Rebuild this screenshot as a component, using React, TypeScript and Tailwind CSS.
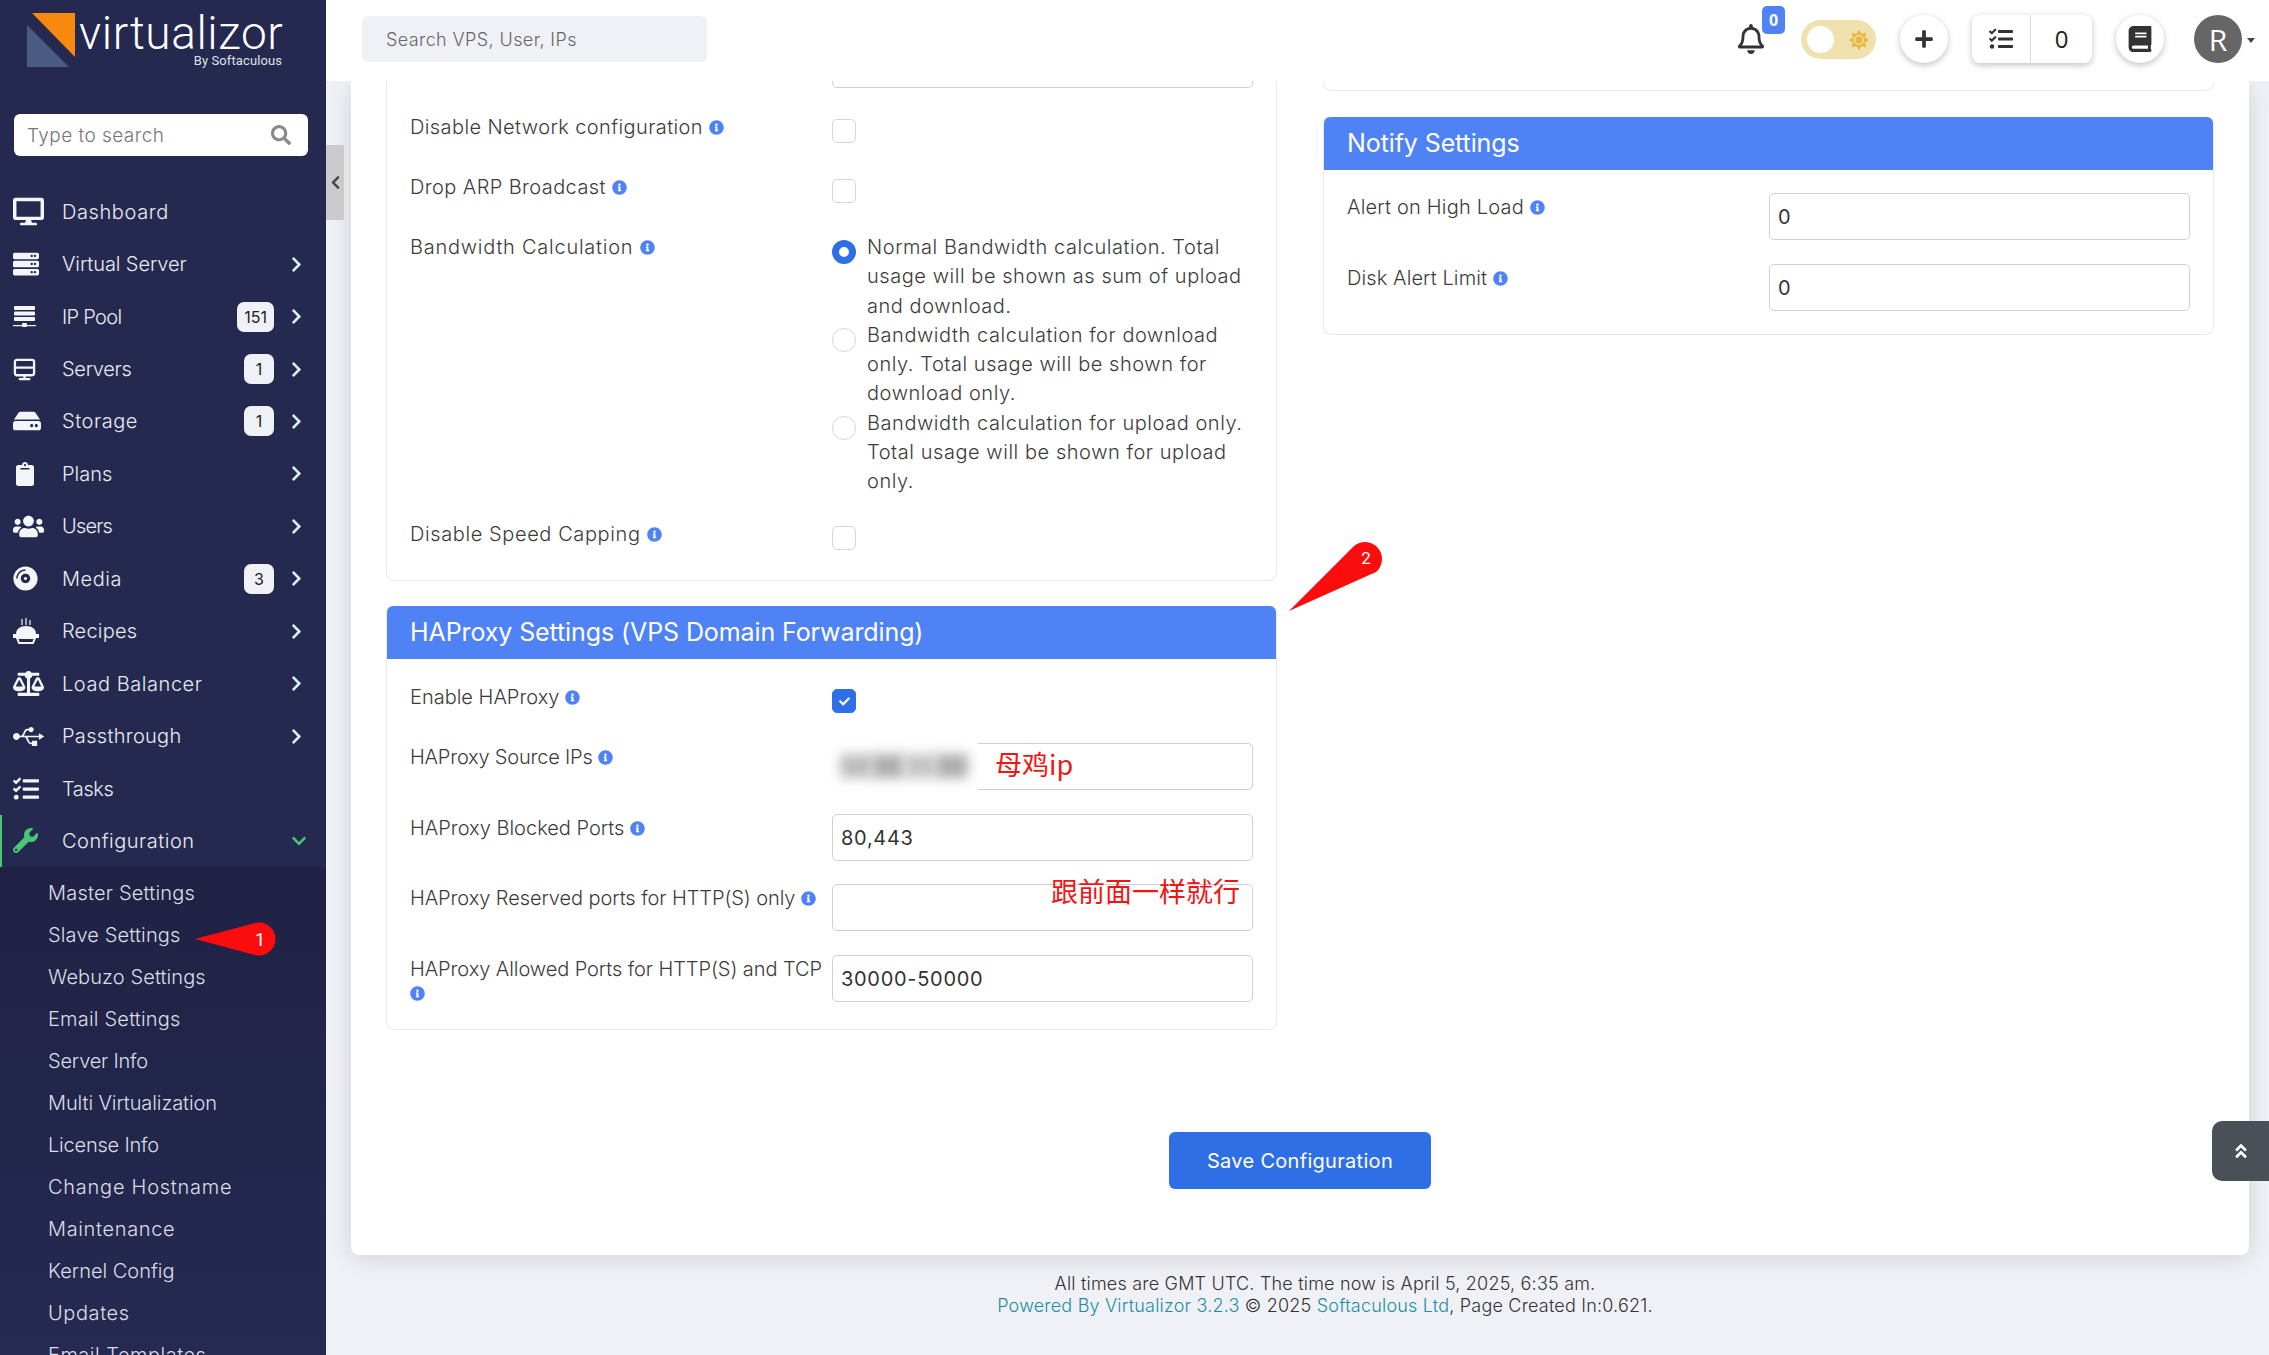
import type { ReactNode } from "react";
import {
  FaBalanceScale,
  FaBook,
  FaChevronDown,
  FaChevronLeft,
  FaChevronRight,
  FaClipboard,
  FaCheck,
  FaCompactDisc,
  FaAngleDoubleUp,
  FaDesktop,
  FaHdd,
  FaInfoCircle,
  FaPlus,
  FaRegBell,
  FaSearch,
  FaServer,
  FaSun,
  FaTasks,
  FaUsb,
  FaUsers,
  FaWrench,
} from "react-icons/fa";

const IpPoolIcon = () => (
  <svg viewBox="0 0 24 22" className="h-[22px] w-[24px]" fill="currentColor">
    <rect x="1" y="0" width="21" height="4" rx="1" />
    <rect x="1" y="5.5" width="21" height="4" rx="1" />
    <rect x="1" y="11" width="21" height="4" rx="1" />
    <rect x="0" y="19" width="23" height="1.2" />
    <rect x="9" y="17" width="5" height="4" rx="1" />
  </svg>
);

const ServersIcon = () => (
  <svg viewBox="0 0 24 24" className="h-[23px] w-[23px]" fill="none" stroke="currentColor" strokeWidth="2.4">
    <rect x="2" y="2" width="20" height="16" rx="2" />
    <path d="M2 10h20M12 18v4M6 22h12" />
  </svg>
);

const RecipesIcon = () => (
  <svg viewBox="0 0 26 26" className="h-[26px] w-[26px]" fill="currentColor">
    <path d="M9 1v6M13 0v7M17 2v5" stroke="currentColor" strokeWidth="1.2" fill="none" />
    <path d="M3 16c0-5 4-8 10-8s10 3 10 8z" />
    <path d="M1 17h24v2H1zM4 20h18l-2 5H6z" fill="none" stroke="currentColor" strokeWidth="2" />
  </svg>
);

const menu: { label: string; track: string; icon: ReactNode; badge?: string; arrow?: boolean }[] = [
  { label: "Dashboard", track: "tracking-[0.6px]", icon: <FaDesktop size={31} /> },
  { label: "Virtual Server", track: "tracking-[-0.1px]", icon: <FaServer size={26} />, arrow: true },
  { label: "IP Pool", track: "tracking-[-0.7px]", icon: <IpPoolIcon />, badge: "151", arrow: true },
  { label: "Servers", track: "tracking-[-0.3px]", icon: <ServersIcon />, badge: "1", arrow: true },
  { label: "Storage", track: "tracking-[0.55px]", icon: <FaHdd size={28} />, badge: "1", arrow: true },
  { label: "Plans", track: "tracking-[0px]", icon: <FaClipboard size={24} />, arrow: true },
  { label: "Users", track: "tracking-[-0.8px]", icon: <FaUsers size={31} />, arrow: true },
  { label: "Media", track: "tracking-[0.55px]", icon: <FaCompactDisc size={25} />, badge: "3", arrow: true },
  { label: "Recipes", track: "tracking-[0.2px]", icon: <RecipesIcon />, arrow: true },
  { label: "Load Balancer", track: "tracking-[0.55px]", icon: <FaBalanceScale size={31} />, arrow: true },
  { label: "Passthrough", track: "tracking-[0.3px]", icon: <FaUsb size={31} />, arrow: true },
  { label: "Tasks", track: "tracking-[-0.4px]", icon: <FaTasks size={26} /> },
];

const submenu = [
  { name: "Master Settings", track: "tracking-[0.2px]" },
  { name: "Slave Settings", track: "tracking-[0.15px]" },
  { name: "Webuzo Settings", track: "tracking-[0.1px]" },
  { name: "Email Settings", track: "tracking-[0.2px]" },
  { name: "Server Info", track: "tracking-[-0.2px]" },
  { name: "Multi Virtualization", track: "tracking-[-0.1px]" },
  { name: "License Info", track: "tracking-[-0.2px]" },
  { name: "Change Hostname", track: "tracking-[0.75px]" },
  { name: "Maintenance", track: "tracking-[0.65px]" },
  { name: "Kernel Config", track: "tracking-[0px]" },
  { name: "Updates", track: "tracking-[0.6px]" },
  { name: "Email Templates", track: "tracking-[0.5px]" },
];

function Sidebar() {
  return (
    <aside className="h-screen w-[326px] shrink-0 overflow-hidden bg-[#252950] text-[#e8e9f0]">
      <div className="flex h-[114px] items-start gap-[3px] pl-[27px] pt-[11px]">
        <svg viewBox="0 0 49 55" className="mt-[2px] h-[55px] w-[49px] shrink-0">
          <polygon points="5,0 48,0 48,44" fill="#f7890f" />
          <polygon points="0,12 42,54 0,54" fill="#4a5a82" />
        </svg>
        <div className="flex w-[203px] flex-col">
          <span className="font-['Roboto',sans-serif] text-[46px] font-light leading-[44px] tracking-[0.6px] text-white">virtualizor</span>
          <span className="self-end font-['Roboto',sans-serif] text-[13px] leading-[12px] tracking-[0.1px] text-[#dfe1ea]">By Softaculous</span>
        </div>
      </div>

      <div className="ml-[14px] mr-[18px] flex h-[42px] items-center justify-between rounded-[6px] bg-white pl-[13px] pr-[17px]">
        <span className="mt-[2px] text-[19px] font-light tracking-[0.45px] text-[#777]">Type to search</span>
        <FaSearch size={20} className="text-[#888]" />
      </div>

      <nav className="mt-[29.5px]">
        {menu.map((item) => (
          <div key={item.label} className="flex h-[52.45px] items-center pl-[13px] pr-[21px]">
            <span className="flex w-[49px] shrink-0 items-center text-[#f4f5f8]">{item.icon}</span>
            <span className={`flex-1 text-[20px] font-light ${item.track}`}>{item.label}</span>
            {item.badge && (
              <span className="mr-[14px] flex h-[30px] min-w-[30px] items-center justify-center rounded-[7px] bg-[#f0f1f7] px-[7px] text-[16px] text-[#222]">
                {item.badge}
              </span>
            )}
            {item.arrow && <FaChevronRight size={17} className="text-[#d5f3f3]" />}
          </div>
        ))}

        <div className="flex h-[52.45px] items-center border-l-2 border-[#48c774] pl-[11px] pr-[19px]">
          <span className="flex w-[49px] shrink-0 items-center text-[#48c774]">
            <FaWrench size={25} />
          </span>
          <span className="flex-1 text-[20px] font-light tracking-[0.5px]">Configuration</span>
          <FaChevronDown size={16} className="text-[#48c774]" />
        </div>

        <div className="bg-gradient-to-b from-[#1f2244] to-[#262a52] pl-[48px] pt-[4.5px]">
          {submenu.map((s) => (
            <div key={s.name} className={`flex h-[42px] items-center text-[20px] font-light text-[#dcdde6] ${s.track}`}>
              {s.name}
            </div>
          ))}
        </div>
      </nav>
    </aside>
  );
}

function Topbar() {
  const circle = "flex h-[48px] w-[48px] items-center justify-center rounded-full bg-white text-[#333] shadow-[0_2px_6px_rgba(0,0,0,0.25)]";
  return (
    <header className="flex h-[81px] shrink-0 items-start bg-white pl-[36px] pt-[15px]">
      <div className="mt-px flex h-[46px] w-[345px] items-center rounded-[6px] bg-[#f0f1f7] pl-[24px] text-[18px] font-light tracking-[0.4px] text-[#666]">
        Search VPS, User, IPs
      </div>
      <div className="ml-auto flex items-start">
        <div className="relative mr-[37px] mt-[9px] h-[30px] w-[27px] text-[#333]">
          <FaRegBell size={30} className="-ml-[1px]" />
          <span className="absolute -top-[18px] left-[25px] flex h-[28px] w-[23px] items-center justify-center rounded-[5px] bg-[#4f83f5] font-['Open_Sans',sans-serif] text-[16px] font-bold text-white">
            0
          </span>
        </div>
        <div className="mr-[24px] mt-[5px] flex h-[39px] w-[75px] items-center justify-between rounded-full bg-[#f0e2ae] pl-[6px] pr-[7px]">
          <span className="h-[27px] w-[27px] rounded-full bg-white" />
          <FaSun size={20} className="text-[#e9b93f]" />
        </div>
        <div className={circle}>
          <FaPlus size={20} />
        </div>
        <div className="ml-[24px] flex h-[48px] w-[120px] rounded-[8px] bg-white text-[#222] shadow-[0_2px_6px_rgba(0,0,0,0.25)]">
          <span className="flex w-[59px] items-center justify-center border-r border-[#ddd]">
            <FaTasks size={24} className="text-[#333]" />
          </span>
          <span className="flex flex-1 items-center justify-center font-['Open_Sans',sans-serif] text-[24px]">0</span>
        </div>
        <div className={`${circle} ml-[24px]`}>
          <FaBook size={26} />
        </div>
        <div className="ml-[30px] flex h-[48px] w-[48px] items-center justify-center rounded-full bg-[#666] font-['Open_Sans',sans-serif] text-[30px] text-white">
          R
        </div>
        <span className="ml-[5px] mr-[14px] mt-[23px] h-0 w-0 border-x-[4.5px] border-t-[5px] border-x-transparent border-t-[#444]" />
      </div>
    </header>
  );
}

function Info({ className = "" }: { className?: string }) {
  return <FaInfoCircle size={15} className={`inline-block shrink-0 text-[#4f83f5] ${className}`} />;
}

function Label({ text, track, wrapInfo }: { text: string; track: string; wrapInfo?: boolean }) {
  return (
    <span className={`block whitespace-nowrap text-[20px] font-light leading-[24px] text-[#3c3c3c] ${track}`}>
      {text} {wrapInfo ? <br /> : null}
      <Info className="align-[-1px]" />
    </span>
  );
}

function Check({ checked }: { checked?: boolean }) {
  return (
    <span
      className={`flex h-[24px] w-[24px] items-center justify-center rounded-[5px] border ${
        checked ? "border-[#2f6fe6] bg-[#2f6fe6]" : "border-[#d6d7dc] bg-white"
      }`}
    >
      {checked && <FaCheck size={11} className="text-white" />}
    </span>
  );
}

function Radio({ on, children }: { on?: boolean; children: ReactNode }) {
  return (
    <div className="flex">
      <span
        className={`mt-[7px] h-[24px] w-[24px] shrink-0 rounded-full ${
          on ? "border-[7px] border-[#2f6fe6] bg-white" : "border border-[#d6d7dc] bg-white"
        }`}
      />
      <p className="ml-[11px] text-[20px] font-light leading-[29.3px] tracking-[0.55px] text-[#3c3c3c]">{children}</p>
    </div>
  );
}

function TextBox({ value, className = "" }: { value?: string; className?: string }) {
  return (
    <div className={`flex h-[47px] items-center rounded-[5px] border border-[#cfd0d6] bg-white pl-[8px] text-[20px] tracking-[0.7px] text-[#333] ${className}`}>
      {value}
    </div>
  );
}

function CardHead({ title }: { title: string }) {
  return (
    <div className="flex h-[53px] items-center rounded-t-[6px] bg-[#4f83f5] pl-[23px] text-[25px] font-normal tracking-[-0.1px] text-white">
      {title}
    </div>
  );
}

function LeftColumn() {
  return (
    <div className="flex flex-col gap-[25px]">
      <div className="h-[500px] rounded-b-[8px] border-x border-b border-[#e9e9ee] px-[23px]">
        <div className="ml-[422px] h-[7px] w-[421px] rounded-b-[5px] border-x border-b border-[#cfd0d6]" />
        <div className="flex h-[60px] items-start pt-[26px]">
          <span className="mt-[1px] w-[422px] shrink-0"><Label text="Disable Network configuration" track="tracking-[0.4px]" /></span>
          <span className="mt-[5px]"><Check /></span>
        </div>
        <div className="flex h-[60px] items-start pt-[26px]">
          <span className="mt-[1px] w-[422px] shrink-0"><Label text="Drop ARP Broadcast" track="tracking-[0.4px]" /></span>
          <span className="mt-[5px]"><Check /></span>
        </div>
        <div className="flex items-start pt-[25px]">
          <span className="mt-[2px] w-[422px] shrink-0"><Label text="Bandwidth Calculation" track="tracking-[0.75px]" /></span>
          <div className="w-[421px]">
            <Radio on>
              Normal Bandwidth calculation. Total usage will be shown as sum of upload and download.
            </Radio>
            <Radio>
              Bandwidth calculation for download only. Total usage will be shown for download only.
            </Radio>
            <Radio>
              Bandwidth calculation for upload only. Total usage will be shown for upload only.
            </Radio>
          </div>
        </div>
        <div className="mt-[24px] flex items-start">
          <span className="mt-[1px] w-[422px] shrink-0"><Label text="Disable Speed Capping" track="tracking-[0.6px]" /></span>
          <span className="mt-[5px]"><Check /></span>
        </div>
      </div>

      <div className="h-[424px] rounded-[8px] border-x border-b border-[#e9e9ee]">
        <CardHead title="HAProxy Settings (VPS Domain Forwarding)" />
        <div className="px-[23px]">
          <div className="flex h-[84px] items-start pt-[26px]">
            <span className="w-[422px] shrink-0"><Label text="Enable HAProxy" track="tracking-[0px]" /></span>
            <span className="mt-[4px]"><Check checked /></span>
          </div>
          <div className="flex h-[71px] items-start">
            <span className="mt-[2px] w-[422px] shrink-0"><Label text="HAProxy Source IPs" track="tracking-[-0.2px]" /></span>
            <div className="relative w-[421px]">
              <TextBox />
              <div className="absolute -left-[2px] -top-[3px] flex h-[52px] w-[148px] items-center bg-white pl-[10px]">
                <div className="h-[24px] w-[32px] bg-[#bdbdbd] blur-[6px]" />
                <div className="h-[24px] w-[32px] bg-[#adadad] blur-[6px]" />
                <div className="h-[24px] w-[32px] bg-[#c4c4c4] blur-[6px]" />
                <div className="h-[24px] w-[32px] bg-[#adadad] blur-[6px]" />
              </div>
              <span className="absolute left-[163px] top-[1px] font-['Noto_Sans_CJK_SC',sans-serif] text-[27px] leading-[40px] text-[#f31414]">
                母鸡ip
              </span>
            </div>
          </div>
          <div className="flex h-[70px] items-start">
            <span className="mt-[2px] w-[422px] shrink-0"><Label text="HAProxy Blocked Ports" track="tracking-[0px]" /></span>
            <div className="w-[421px]"><TextBox value="80,443" /></div>
          </div>
          <div className="flex h-[71px] items-start">
            <span className="mt-[2px] w-[422px] shrink-0"><Label text="HAProxy Reserved ports for HTTP(S) only" track="tracking-[-0.08px]" /></span>
            <div className="relative w-[421px]">
              <TextBox />
              <span className="absolute left-[219px] -top-[13px] font-['Noto_Sans_CJK_SC',sans-serif] text-[27px] leading-[40px] text-[#f31414]">
                跟前面一样就行
              </span>
            </div>
          </div>
          <div className="flex items-start">
            <span className="mt-[2px] w-[422px] shrink-0"><Label text="HAProxy Allowed Ports for HTTP(S) and TCP" track="tracking-[-0.08px]" wrapInfo /></span>
            <div className="w-[421px]"><TextBox value="30000-50000" /></div>
          </div>
        </div>
      </div>
    </div>
  );
}

function RightColumn() {
  return (
    <div className="flex flex-col gap-[26px]">
      <div className="h-[10px] rounded-b-[8px] border-x border-b border-[#e9e9ee]" />
      <div className="h-[218px] rounded-[8px] border-x border-b border-[#e9e9ee]">
        <CardHead title="Notify Settings" />
        <div className="px-[23px] pt-[23px]">
          <div className="flex h-[71px] items-start">
            <span className="mt-[2px] w-[423px] shrink-0"><Label text="Alert on High Load" track="tracking-[0.2px]" /></span>
            <div className="ml-[-1px] w-[421px]"><TextBox value="0" /></div>
          </div>
          <div className="flex items-start">
            <span className="mt-[2px] w-[423px] shrink-0"><Label text="Disk Alert Limit" track="tracking-[0.1px]" /></span>
            <div className="ml-[-1px] w-[421px]"><TextBox value="0" /></div>
          </div>
        </div>
      </div>
    </div>
  );
}

export default function App() {
  return (
    <div className="flex h-screen w-full overflow-hidden bg-[#f0f1f7] font-['Inter',sans-serif]">
      <Sidebar />
      <div className="flex min-w-0 flex-1 flex-col">
        <Topbar />
        <main className="relative flex-1 overflow-hidden bg-[#f0f1f7] px-[20px] pl-[25px]">
          <div className="h-[1174px] rounded-b-[8px] bg-white px-[35px] shadow-[0_4px_24px_rgba(0,0,0,0.12)]">
            <div className="grid grid-cols-[891px_891px] gap-x-[46px]">
              <LeftColumn />
              <RightColumn />
            </div>
            <div className="mt-[102px] flex justify-center">
              <button className="h-[57px] w-[262px] rounded-[6px] bg-[#2f6fe6] text-[20px] font-normal tracking-[0.3px] text-white">
                Save Configuration
              </button>
            </div>
          </div>

          <footer className="mt-[18px] pl-[50px] text-center text-[18px] font-light leading-[22px] tracking-[0.2px] text-[#333]">
            <p>All times are GMT UTC. The time now is April 5, 2025, 6:35 am.</p>
            <p>
              <span className="text-[#1d8fa3]">Powered By Virtualizor 3.2.3</span> © 2025{" "}
              <span className="text-[#1d8fa3]">Softaculous Ltd</span>, Page Created In:0.621.
            </p>
          </footer>

          {/* sidebar collapse tab */}
          <div className="absolute left-0 top-[64px] flex h-[75px] w-[18px] items-center justify-center bg-[#cbcbcb] text-[#444]">
            <FaChevronLeft size={15} />
          </div>

          {/* back to top */}
          <div className="absolute right-0 top-[1040px] flex h-[60px] w-[57px] items-center justify-center rounded-l-[10px] bg-[#495057] text-white">
            <FaAngleDoubleUp size={18} />
          </div>

          {/* annotation 2 */}
          <svg viewBox="0 0 120 90" className="absolute left-[950px] top-[450px] h-[90px] w-[120px]">
            <path d="M13 80 L77 16 A17 17 0 1 1 100 41 Z" fill="#fb0d0d" />
            <text x="90" y="33" fill="#fff" fontSize="17" fontFamily="Roboto, sans-serif" textAnchor="middle">2</text>
          </svg>
        </main>
      </div>

      {/* annotation 1 */}
      <svg viewBox="0 0 90 36" className="absolute left-[193px] top-[920px] h-[36px] w-[90px]">
        <path d="M2 19 L62 3 A16.5 16.5 0 1 1 62 35 Z" fill="#fb0d0d" />
        <text x="67" y="26" fill="#fff" fontSize="18" fontFamily="Roboto, sans-serif" textAnchor="middle">1</text>
      </svg>
    </div>
  );
}
